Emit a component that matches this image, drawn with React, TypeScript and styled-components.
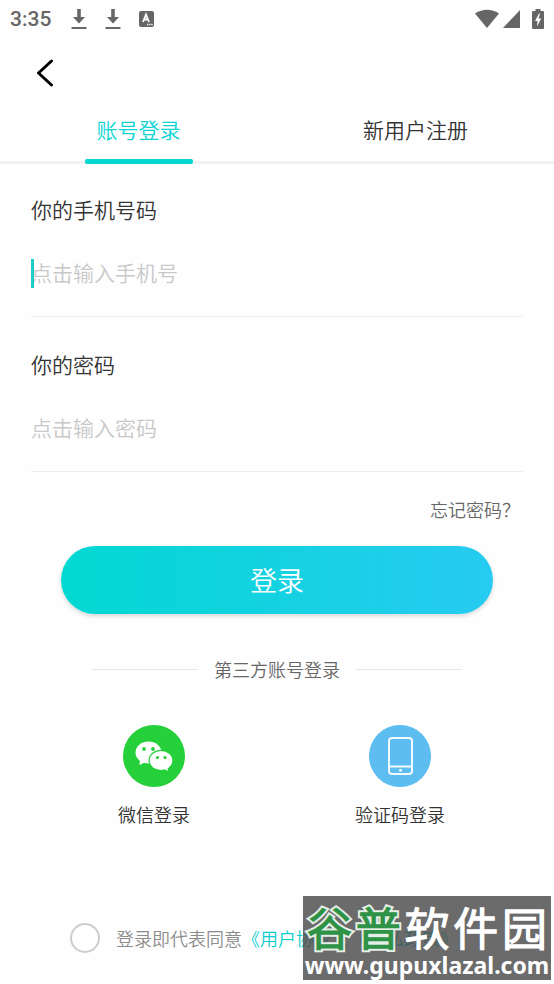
import React, { useState } from "react";
import styled, { createGlobalStyle } from "styled-components";

const Global = createGlobalStyle`
  *, *::before, *::after { box-sizing: border-box; }
  body {
    margin: 0;
    background: #fefefe;
    color: #333;
    font-family: "Noto Sans CJK SC DemiLight", "Noto Sans CJK SC", sans-serif;
    font-weight: 350;
  }
  button, input { font: inherit; color: inherit; }
  button { border: 0; padding: 0; background: none; cursor: pointer; }
`;

const Page = styled.main`
  position: relative;
  min-height: 100vh;
  display: flex;
  flex-direction: column;
`;

const StatusBar = styled.header`
  height: 38px;
  padding: 0 10px;
  display: flex;
  align-items: center;
  justify-content: space-between;
  color: #666;
`;

const StatusGroup = styled.div<{ $gap: number }>`
  display: flex;
  align-items: center;
  gap: ${(p) => p.$gap}px;
`;

const Clock = styled.span`
  margin-right: 2px;
  font: 500 21px/38px Roboto, sans-serif;
`;

const NavBar = styled.nav`
  height: 70px;
  padding: 0 25px;
  display: flex;
  align-items: center;
`;

const BackButton = styled.button`
  width: 40px;
  height: 40px;
  display: grid;
  place-items: center;
`;

const Tabs = styled.div`
  display: grid;
  grid-template-columns: 1fr 1fr;
  height: 56px;
  border-bottom: 3px solid #f1f1f1;
`;

const Tab = styled.button<{ $active: boolean }>`
  position: relative;
  height: 56px;
  padding-bottom: 14px;
  font-size: 21px;
  line-height: 42px;
  color: ${(p) => (p.$active ? "#0bd5d3" : "#333")};

  &::after {
    content: "";
    display: ${(p) => (p.$active ? "block" : "none")};
    position: absolute;
    left: calc(50% - 54px);
    bottom: 0;
    width: 108px;
    height: 5px;
    border-radius: 2px;
    background: #06d6d0;
  }
`;

const Form = styled.form`
  padding: 24px 31px 0;
  display: flex;
  flex-direction: column;
`;

const Field = styled.div`
  display: flex;
  flex-direction: column;
  margin-bottom: 26px;
  border-bottom: 1px solid #efefef;
`;

const FieldLabel = styled.label`
  font-size: 21px;
  line-height: 42px;
`;

const InputRow = styled.div`
  position: relative;
  display: flex;
  height: 86px;
`;

const TextInput = styled.input`
  flex: 1;
  min-width: 0;
  padding: 0 0 2px;
  border: 0;
  outline: 0;
  background: none;
  font-size: 21px;
  &::placeholder { color: #c8c8c8; opacity: 1; }
`;

const Caret = styled.span`
  position: absolute;
  left: 0;
  top: 29px;
  width: 3px;
  height: 29px;
  background: #1fcbc6;
`;

const Forgot = styled.a`
  align-self: flex-end;
  margin-right: 3px;
  color: #666;
  font-size: 18px;
  line-height: 22px;
  text-decoration: none;
`;

const SubmitButton = styled.button`
  height: 68px;
  margin: 26px 30px 0;
  border-radius: 34px;
  background: linear-gradient(90deg, #02d8d2, #27cbf1);
  box-shadow: 0 2px 4px rgba(0, 0, 0, 0.16);
  color: #fff;
  font-size: 27px;
  line-height: 68px;
`;

const Divider = styled.div`
  margin: 41px 92px 0;
  display: flex;
  align-items: center;
  gap: 16px;
  color: #666;
  font-size: 18px;
  line-height: 28px;

  &::before, &::after {
    content: "";
    flex: 1;
    height: 1px;
    background: #e6e6e6;
  }
`;

const Providers = styled.div`
  margin: 42px 31px 0;
  display: grid;
  grid-template-columns: 1fr 1fr;
`;

const Provider = styled.button`
  display: flex;
  flex-direction: column;
  align-items: center;
  gap: 13px;
  font-size: 18px;
  line-height: 28px;
`;

const Agreement = styled.div`
  margin-top: auto;
  padding: 0 0 31px 70px;
  display: flex;
  align-items: center;
  gap: 16px;
  font-size: 18px;
  line-height: 30px;
  color: #8c8c8c;
  white-space: nowrap;
  a { color: #0bcfcd; text-decoration: none; }
`;

const Check = styled.input`
  appearance: none;
  width: 30px;
  height: 30px;
  margin: 0;
  flex: none;
  border: 2px solid #ccc;
  border-radius: 50%;
  &:checked { background: #06d6d0; }
`;

const Watermark = styled.div`
  position: absolute;
  right: 3px;
  bottom: 4px;
  width: 248px;
  height: 84px;
  background: rgba(74, 74, 74, 0.82);
  color: #fff;
  text-align: center;
`;

const BrandName = styled.div`
  display: flex;
  justify-content: space-between;
  padding: 0 4px;
  font-size: 45px;
  font-weight: 900;
  line-height: 62px;
  height: 58px;
  white-space: nowrap;
`;

const BrandChar = styled.span<{ $green?: boolean }>`
  color: ${(p) => (p.$green ? "#2f9347" : "#fff")};
  -webkit-text-stroke: ${(p) => (p.$green ? "4px #e4eee6" : "0")};
  paint-order: stroke fill;
`;

const BrandSite = styled.div`
  font: 700 23px/22px "Noto Sans", sans-serif;
`;

const DownloadIcon = () => (
  <svg width="16" height="22" viewBox="0 0 16 22" fill="currentColor" aria-hidden="true">
    <path d="M6.2 1h3.600v8H14l-6 6.500L2 9h4.200zM.5 19h15v2H.5z" />
  </svg>
);

const KeyboardIcon = () => (
  <svg width="15" height="16" viewBox="0 0 15 16" aria-hidden="true">
    <rect width="15" height="16" rx="2" fill="currentColor" />
    <path d="M4 11 7 3.500 10 11M5 8.500h4" fill="none" stroke="#fff" strokeWidth="1.800" />
    <path d="M8 13.500h1.300M10.200 13.500h1.300M12.300 13.500h1.300" stroke="#fff" strokeWidth="1.300" />
  </svg>
);

const WifiIcon = () => (
  <svg width="24" height="20" viewBox="0 0 24 20" aria-hidden="true">
    <path d="M0 4.500Q12-3 24 4.500L12 19z" fill="currentColor" />
  </svg>
);

const SignalIcon = () => (
  <svg width="17" height="18" viewBox="0 0 17 18" aria-hidden="true">
    <path d="M17 0v18H0z" fill="currentColor" />
  </svg>
);

const BatteryIcon = () => (
  <svg width="12" height="20" viewBox="0 0 12 20" aria-hidden="true">
    <path d="M3.500 0h5v2H11q1 0 1 1v16q0 1-1 1H1q-1 0-1-1V3q0-1 1-1h2.500z" fill="currentColor" />
    <path d="M7 4.500 3 12h2.500L5 17.500 9.200 9.500H6.600L8 4.500z" fill="#fff" />
  </svg>
);

const BackIcon = () => (
  <svg width="18" height="28" viewBox="0 0 18 28" aria-hidden="true">
    <path d="M15.500 2 2.500 14l13 12" fill="none" stroke="#000" strokeWidth="3" strokeLinecap="round" strokeLinejoin="round" />
  </svg>
);

const WechatIcon = () => (
  <svg width="62" height="62" viewBox="0 0 62 62" aria-hidden="true">
    <circle cx="31" cy="31" r="31" fill="#25d03a" />
    <path d="M17 34.500 16.500 40l6-3z" fill="#fff" />
    <ellipse cx="25.500" cy="27.500" rx="13" ry="11" fill="#fff" />
    <ellipse cx="38" cy="35.500" rx="12.500" ry="10.800" fill="#25d03a" />
    <ellipse cx="38" cy="35.500" rx="11.300" ry="9.600" fill="#fff" />
    <path d="m40 43 5 3-.8-5z" fill="#fff" />
    <g fill="#25d03a">
      <circle cx="21" cy="24" r="1.900" />
      <circle cx="30" cy="24" r="1.900" />
      <circle cx="34.500" cy="32.500" r="1.600" />
      <circle cx="42" cy="32.500" r="1.600" />
    </g>
  </svg>
);

const PhoneIcon = () => (
  <svg width="62" height="62" viewBox="0 0 62 62" aria-hidden="true">
    <circle cx="31" cy="31" r="31" fill="#5dbdf1" />
    <rect x="20" y="13" width="23" height="36" rx="3" fill="none" stroke="#effbff" strokeWidth="2" />
    <path d="M20 41.500h23" stroke="#effbff" strokeWidth="2" />
    <circle cx="31.500" cy="45.300" r="1.500" fill="#effbff" />
  </svg>
);

export default function App() {
  const [tab, setTab] = useState(0);
  const [phone, setPhone] = useState("");
  const [password, setPassword] = useState("");

  return (
    <Page>
      <Global />
      <StatusBar>
        <StatusGroup $gap={18}>
          <Clock>3:35</Clock>
          <DownloadIcon />
          <DownloadIcon />
          <KeyboardIcon />
        </StatusGroup>
        <StatusGroup $gap={12}>
          <StatusGroup $gap={4}>
            <WifiIcon />
            <SignalIcon />
          </StatusGroup>
          <BatteryIcon />
        </StatusGroup>
      </StatusBar>
      <NavBar>
        <BackButton type="button" aria-label="返回"><BackIcon /></BackButton>
      </NavBar>
      <Tabs role="tablist">
        {["账号登录", "新用户注册"].map((name, i) => (
          <Tab key={name} type="button" role="tab" aria-selected={tab === i} $active={tab === i} onClick={() => setTab(i)}>
            {name}
          </Tab>
        ))}
      </Tabs>
      <Form onSubmit={(e) => e.preventDefault()}>
        <Field>
          <FieldLabel htmlFor="phone">你的手机号码</FieldLabel>
          <InputRow>
            <TextInput id="phone" type="tel" placeholder="点击输入手机号" value={phone} onChange={(e) => setPhone(e.target.value)} />
            {phone === "" && <Caret />}
          </InputRow>
        </Field>
        <Field>
          <FieldLabel htmlFor="password">你的密码</FieldLabel>
          <InputRow>
            <TextInput id="password" type="password" placeholder="点击输入密码" value={password} onChange={(e) => setPassword(e.target.value)} />
          </InputRow>
        </Field>
        <Forgot href="#forgot">忘记密码？</Forgot>
        <SubmitButton type="submit">登录</SubmitButton>
      </Form>
      <Divider>第三方账号登录</Divider>
      <Providers>
        <Provider type="button"><WechatIcon />微信登录</Provider>
        <Provider type="button"><PhoneIcon />验证码登录</Provider>
      </Providers>
      <Agreement>
        <Check id="agree" type="checkbox" />
        <span>
          <label htmlFor="agree">登录即代表同意</label>
          <a href="#terms">《用户协议》</a>、<a href="#privacy">《隐私政策》</a>
        </span>
      </Agreement>
      <Watermark>
        <BrandName>
          <BrandChar $green>谷</BrandChar>
          <BrandChar $green>普</BrandChar>
          <BrandChar>软</BrandChar>
          <BrandChar>件</BrandChar>
          <BrandChar>园</BrandChar>
        </BrandName>
        <BrandSite>www.gupuxlazal.com</BrandSite>
      </Watermark>
    </Page>
  );
}
